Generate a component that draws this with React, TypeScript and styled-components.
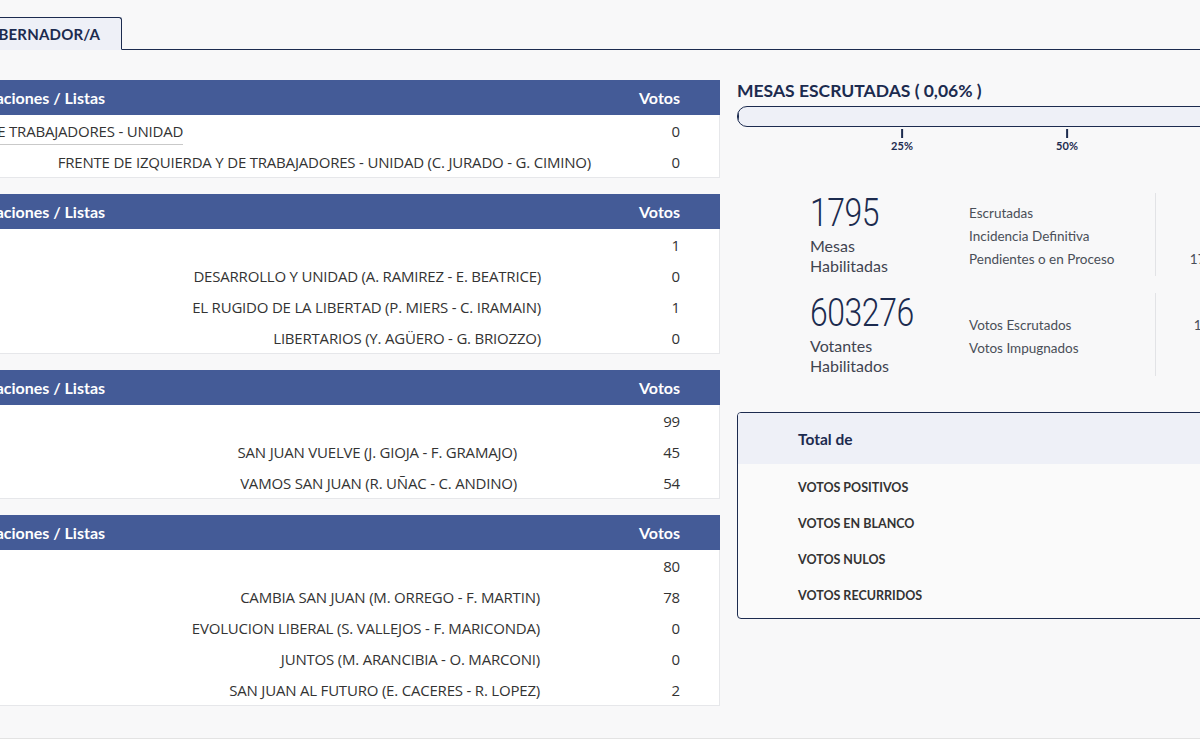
import styled, { createGlobalStyle } from 'styled-components'

const GlobalStyles = createGlobalStyle`
  * { box-sizing: border-box; }
  html, body {
    margin: 0;
    padding: 0;
    background: #f8f8f9;
    overflow: hidden;
  }
  body {
    font-family: "Lato", "Open Sans", sans-serif;
    color: #1c2b4f;
  }
`

interface IList {
  name: string
  votes: number
}

interface IAgrupacion {
  name: string
  votes: number
  gap: number
  lists: IList[]
}

const agrupaciones: IAgrupacion[] = [
  {
    name: 'FRENTE DE IZQUIERDA Y DE TRABAJADORES - UNIDAD',
    votes: 0,
    gap: 29,
    lists: [
      { name: 'FRENTE DE IZQUIERDA Y DE TRABAJADORES - UNIDAD (C. JURADO - G. CIMINO)', votes: 0 },
    ],
  },
  {
    name: '',
    votes: 1,
    gap: 79,
    lists: [
      { name: 'DESARROLLO Y UNIDAD (A. RAMIREZ - E. BEATRICE)', votes: 0 },
      { name: 'EL RUGIDO DE LA LIBERTAD (P. MIERS - C. IRAMAIN)', votes: 1 },
      { name: 'LIBERTARIOS (Y. AGÜERO - G. BRIOZZO)', votes: 0 },
    ],
  },
  {
    name: '',
    votes: 99,
    gap: 103,
    lists: [
      { name: 'SAN JUAN VUELVE (J. GIOJA - F. GRAMAJO)', votes: 45 },
      { name: 'VAMOS SAN JUAN (R. UÑAC - C. ANDINO)', votes: 54 },
    ],
  },
  {
    name: '',
    votes: 80,
    gap: 80,
    lists: [
      { name: 'CAMBIA SAN JUAN (M. ORREGO - F. MARTIN)', votes: 78 },
      { name: 'EVOLUCION LIBERAL (S. VALLEJOS - F. MARICONDA)', votes: 0 },
      { name: 'JUNTOS (M. ARANCIBIA - O. MARCONI)', votes: 0 },
      { name: 'SAN JUAN AL FUTURO (E. CACERES - R. LOPEZ)', votes: 2 },
    ],
  },
]

const mesas = [
  { label: 'Escrutadas', value: '1' },
  { label: 'Incidencia Definitiva', value: '0' },
  { label: 'Pendientes o en Proceso', value: '1794' },
]

const votantes = [
  { label: 'Votos Escrutados', value: '186' },
  { label: 'Votos Impugnados', value: '0' },
]

const totales = ['VOTOS POSITIVOS', 'VOTOS EN BLANCO', 'VOTOS NULOS', 'VOTOS RECURRIDOS']

const progress = 0.06


function App() {
  return (
    <>
      <GlobalStyles />
      <Viewport>
        <Page>
          <TabBar>
            <Tab>GOBERNADOR/A</Tab>
          </TabBar>

          <Main>
            <TablesColumn>
              {agrupaciones.map((agrupacion, i) => (
                <VoteTable key={ i }>
                  <TableHeader>
                    <HeaderTitle>Agrupaciones / Listas</HeaderTitle>
                    <HeaderVotes>Votos</HeaderVotes>
                  </TableHeader>
                  <AgrupacionRow>
                    <AgrupacionName>
                      { agrupacion.name && <Underlined>{ agrupacion.name }</Underlined> }
                    </AgrupacionName>
                    <Votes>{ agrupacion.votes }</Votes>
                  </AgrupacionRow>
                  {agrupacion.lists.map(list => (
                    <ListRow key={ list.name }>
                      <ListName gap={ agrupacion.gap }>{ list.name }</ListName>
                      <Votes>{ list.votes }</Votes>
                    </ListRow>
                  ))}
                </VoteTable>
              ))}
            </TablesColumn>

            <SidePanel>
              <PanelTitle>MESAS ESCRUTADAS ( 0,06% )</PanelTitle>
              <ProgressTrack>
                <ProgressFill style={{ width: `${progress}%` }} />
              </ProgressTrack>
              <Scale>
                {[25, 50, 75].map(p => (
                  <Tick key={ p } style={{ left: `${p}%` }}>
                    <TickLine />
                    <TickLabel>{ p }%</TickLabel>
                  </Tick>
                ))}
              </Scale>

              <Stats>
                <StatRow>
                  <StatMain>
                    <BigNumber>1795</BigNumber>
                    <BigLabel>Mesas<br />Habilitadas</BigLabel>
                  </StatMain>
                  <DetailLabels>
                    {mesas.map(m => <DetailText key={ m.label }>{ m.label }</DetailText>)}
                  </DetailLabels>
                  <DetailValues>
                    {mesas.map(m => <DetailText key={ m.label }>{ m.value }</DetailText>)}
                  </DetailValues>
                </StatRow>

                <StatRow>
                  <StatMain>
                    <BigNumber>603276</BigNumber>
                    <BigLabel>Votantes<br />Habilitados</BigLabel>
                  </StatMain>
                  <DetailLabels>
                    {votantes.map(v => <DetailText key={ v.label }>{ v.label }</DetailText>)}
                  </DetailLabels>
                  <DetailValues>
                    {votantes.map(v => <DetailText key={ v.label }>{ v.value }</DetailText>)}
                  </DetailValues>
                </StatRow>
              </Stats>

              <TotalBox>
                <TotalHeader>Total de</TotalHeader>
                <TotalList>
                  {totales.map(t => <TotalItem key={ t }>{ t }</TotalItem>)}
                </TotalList>
              </TotalBox>
            </SidePanel>
          </Main>

          <Footer />
        </Page>
      </Viewport>
    </>
  )
}


// the screenshot shows the page scrolled: its left part lies outside the window
const Viewport = styled.div`
  width: 100vw;
  height: 100vh;
  overflow: hidden;
`

const Page = styled.div`
  width: 1600px;
  margin-left: -200px;
  padding-top: 17px;
`

const TabBar = styled.div`
  display: flex;
  padding-left: 153px;
  border-bottom: 1px solid #1c2b4f;
`

const Tab = styled.div`
  height: 33px;
  margin-bottom: -1px;
  padding: 0 21px;
  display: flex;
  align-items: center;
  background: #eef0f7;
  border: 1px solid #1c2b4f;
  border-bottom-color: #eef0f7;
  border-radius: 3px 3px 0 0;
  font-size: 15px;
  font-weight: 700;
  letter-spacing: 0.2px;
  color: #1c2b4f;
`

const Main = styled.div`
  display: grid;
  grid-template-columns: 920px 660px;
  column-gap: 17px;
  align-items: start;
  margin-top: 30px;
`

const TablesColumn = styled.div`
  display: flex;
  flex-direction: column;
  gap: 16px;
`

const VoteTable = styled.div`
  background: #fff;
  border: 1px solid #e6e7ea;
  border-top: none;
`

const TableHeader = styled.div`
  height: 35px;
  display: flex;
  align-items: center;
  justify-content: space-between;
  margin: 0 -1px;
  padding: 0 40px 1px 152px;
  background: #445b97;
  color: #fff;
  font-size: 16px;
  font-weight: 700;
`

const HeaderTitle = styled.span``

const HeaderVotes = styled.span``

const RowBase = styled.div`
  height: 31px;
  display: flex;
  align-items: center;
  padding: 0 39px 0 16px;
  font-family: "Open Sans", "Noto Sans", sans-serif;
  font-size: 15px;
  letter-spacing: -0.2px;
  color: #333;
`

const AgrupacionRow = styled(RowBase)``

const ListRow = styled(RowBase)``

const AgrupacionName = styled.div`
  flex: 1;
  white-space: nowrap;
`

const Underlined = styled.span`
  padding-bottom: 3px;
  border-bottom: 1px solid #c9c9c9;
`

interface IListName {
  gap: number
}

const ListName = styled.div<IListName>`
  flex: 1;
  text-align: right;
  padding-right: ${props => props.gap}px;
  white-space: nowrap;
`

const Votes = styled.div`
  width: 60px;
  text-align: right;
`

const SidePanel = styled.div`
  display: flex;
  flex-direction: column;
`

const PanelTitle = styled.h2`
  margin: 0;
  height: 24px;
  line-height: 22px;
  font-size: 17.5px;
  font-weight: 700;
  color: #1c2b4f;
`

const ProgressTrack = styled.div`
  height: 21px;
  margin-top: 2px;
  background: #eef0f7;
  border: 1px solid #1c2b4f;
  border-radius: 10px;
  overflow: hidden;
`

const ProgressFill = styled.div`
  height: 100%;
  background: #1c2b4f;
`

const Scale = styled.div`
  position: relative;
  height: 26px;
`

const Tick = styled.div`
  position: absolute;
  top: 2px;
  transform: translateX(-50%);
  display: flex;
  flex-direction: column;
  align-items: center;
`

const TickLine = styled.div`
  width: 2px;
  height: 9px;
  background: #1c2b4f;
`

const TickLabel = styled.span`
  margin-top: 1px;
  font-size: 11px;
  font-weight: 700;
  color: #1c2b4f;
`

const Stats = styled.div`
  display: flex;
  flex-direction: column;
  gap: 20px;
  margin-top: 40px;
  padding-left: 73px;
`

const StatRow = styled.div`
  display: grid;
  grid-template-columns: 159px 186px 100px;
  height: 80px;
`

const StatMain = styled.div`
  margin-top: -2px;
`

const BigNumber = styled.div`
  height: 45px;
  line-height: 45px;
  font-family: "Roboto", sans-serif;
  font-size: 38px;
  font-weight: 300;
  letter-spacing: -0.5px;
  transform: scaleX(0.84);
  transform-origin: left center;
  color: #1c2b4f;
`

const BigLabel = styled.div`
  font-size: 16px;
  line-height: 20px;
  color: #3f4450;
`

const DetailLabels = styled.div`
  display: flex;
  flex-direction: column;
  justify-content: center;
  padding-top: 4px;
`

const DetailValues = styled(DetailLabels)`
  align-items: center;
  border-left: 1px solid #e2e3e6;
`

const DetailText = styled.span`
  line-height: 23px;
  font-size: 13.5px;
  color: #4a4f58;
`

const TotalBox = styled.div`
  margin-top: 39px;
  background: #fafafa;
  border: 1px solid #1c2b4f;
  border-radius: 4px;
  overflow: hidden;
`

const TotalHeader = styled.div`
  height: 51px;
  display: flex;
  align-items: center;
  padding-left: 60px;
  background: #eef0f7;
  font-size: 15.5px;
  font-weight: 700;
  color: #1c2b4f;
`

const TotalList = styled.div`
  display: flex;
  flex-direction: column;
  padding: 5px 0 5px 60px;
`

const TotalItem = styled.div`
  height: 36px;
  display: flex;
  align-items: center;
  font-size: 12.5px;
  font-weight: 700;
  color: #333;
`

const Footer = styled.div`
  margin-top: 32px;
  border-top: 1px solid #e3e3e3;
`

export default App
